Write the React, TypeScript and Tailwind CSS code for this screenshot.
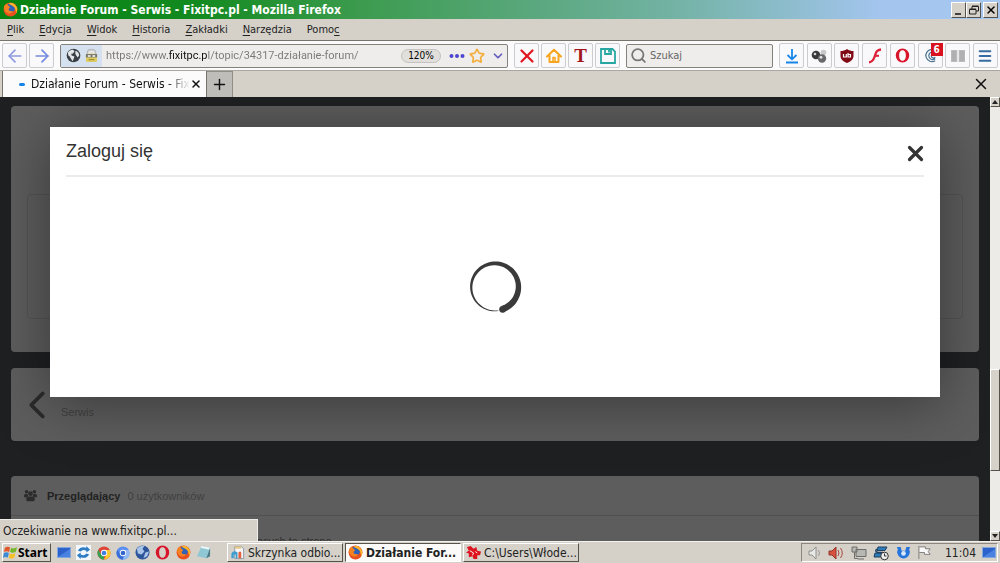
import type { ReactNode } from 'react'
import clsx from 'clsx'
import { ArrowLeft, ArrowRight, ChevronDown, ChevronLeft, Menu, Plus, Search, Star, X } from 'lucide-react'

const MENU = [
  ['', 'P', 'lik'],
  ['', 'E', 'dycja'],
  ['', 'W', 'idok'],
  ['', 'H', 'istoria'],
  ['', 'Z', 'akładki'],
  ['', 'N', 'arzędzia'],
  ['Pomo', 'c', ''],
]

const RAISED = 'border border-t-white border-l-white border-r-[#55524c] border-b-[#55524c] bg-[#d6d2ca]'

// Ring that grows thicker clockwise, from a hairline at the bottom to a round end
const RING = (() => {
  const outer: string[] = []
  const inner: string[] = []
  for (let i = 0; i <= 72; i++) {
    const t = i / 72
    const a = ((82 + t * 349) * Math.PI) / 180
    const half = 0.3 + 3 * t
    const at = (r: number) => `${(28 + r * Math.cos(a)).toFixed(2)} ${(28 + r * Math.sin(a)).toFixed(2)}`
    outer.push(at(24 + half * 0.8))
    inner.unshift(at(24 - half * 1.2))
  }
  return `M${outer.concat(inner).join('L')}Z`
})()

function FirefoxIcon({ className }: { className?: string }) {
  return (
    <svg viewBox="0 0 16 16" className={clsx('size-[15px] shrink-0', className)}>
      <circle cx="8" cy="8" r="7.4" fill="#e8501f" />
      <circle cx="8" cy="6.5" r="4.8" fill="#2f62b8" />
      <path d="M6 1.6C8 .8 11 1 12.500 2.700 15.500 5 16 9 14 12 13.500 7 12 5 10 4 8.500 3 7 3 6 1.600Z" fill="#fdb32a" />
      <path d="M1 4.500C2 3 3 3 3.500 1.500 5 3 6.500 4 7.500 5.500L6 7.500C6 9.500 8 10.500 11 9.500 9.500 12.500 6 13 4 11.500 2 10 1 8 1 4.500Z" fill="#f58220" />
    </svg>
  )
}

function ChromeIcon({ colors }: { colors: [string, string, string, string] }) {
  return (
    <svg viewBox="0 0 16 16" className="size-[14px]">
      <circle cx="8" cy="8" r="7.500" fill={colors[0]} />
      <path d="M1.500 4.300 5.200 10.500 8 8 8 15.500A7.500 7.500 0 0 1 1.500 4.300Z" fill={colors[1]} />
      <path d="M8 4.600H14.700A7.500 7.500 0 0 1 8 15.500L11 9.500Z" fill={colors[2]} />
      <circle cx="8" cy="8" r="3.600" fill="#fff" />
      <circle cx="8" cy="8" r="2.700" fill={colors[3]} />
    </svg>
  )
}

function OperaIcon() {
  return (
    <svg viewBox="0 0 16 16" className="size-[15px]">
      <path fillRule="evenodd" d="M8 .6A7.200 7.400 0 1 0 8 15.400 7.200 7.400 0 1 0 8 .6ZM8 2.400C10.500 2.400 11.600 5 11.600 8S10.500 13.600 8 13.600 4.400 11 4.400 8 5.500 2.400 8 2.400Z" fill="#d8152a" />
    </svg>
  )
}

function MonitorIcon() {
  return (
    <svg viewBox="0 0 14 12" className="h-3 w-[14px]">
      <rect x=".5" y=".5" width="13" height="10" fill="#2b62cc" stroke="#83a6dd" />
      <path d="M1 10 13 2V10Z" fill="#4a82e2" />
    </svg>
  )
}

function CrowdIcon() {
  return (
    <svg viewBox="0 0 14 14" className="h-[13px] w-[13px]" fill="#2c2c2c">
      <circle cx="2.800" cy="3" r="1.900" />
      <circle cx="11.200" cy="3" r="1.900" />
      <circle cx="7" cy="5" r="2.500" />
      <path d="M0 9V6.500Q1 5 4 5.500L4.500 8 3 9ZM14 9V6.500Q13 5 10 5.500L9.500 8 11 9Z" />
      <path d="M2.500 12.500V10Q3 8 5 8H9Q11 8 11.500 10V12.500Q11 13.300 10 13.300H4Q3 13.300 2.500 12.500Z" />
    </svg>
  )
}

function ToolButton({ label, children }: { label: string; children: ReactNode }) {
  return (
    <button
      aria-label={label}
      className="relative flex size-[25px] shrink-0 items-center justify-center rounded-xs border border-[#ccccd0] bg-[#f9f9fb]"
    >
      {children}
    </button>
  )
}

function TitleBar() {
  return (
    <header className="flex h-[19px] shrink-0 items-center bg-[linear-gradient(90deg,#078311_0%,#138a20_20%,#3c9b4e_36%,#72b2a3_67%,#a3c5ee_88%,#a6c8f0_100%)] pr-[2px] pl-[3px]">
      <FirefoxIcon />
      <h1 className="ml-[2px] flex-1 text-xs font-bold text-white">
        Działanie Forum - Serwis - Fixitpc.pl - Mozilla Firefox
      </h1>
      <div className="flex">
        <button aria-label="Minimalizuj" className={clsx(RAISED, 'flex h-4 w-[15px] items-center justify-center')}>
          <svg viewBox="0 0 12 12" className="size-3"><path d="M2 10H8" stroke="#111" strokeWidth="1.500" /></svg>
        </button>
        <button aria-label="Przywróć" className={clsx(RAISED, 'mr-[2px] flex h-4 w-[15px] items-center justify-center')}>
          <svg viewBox="0 0 12 12" className="size-3" fill="none" stroke="#222">
            <path d="M4 5V2.500H10.500V7H8M4 2H10.500M1.500 5.500H8V10H1.500ZM1.500 5H8" />
          </svg>
        </button>
        <button aria-label="Zamknij" className={clsx(RAISED, 'flex h-4 w-[15px] items-center justify-center')}>
          <X className="size-3 text-black" strokeWidth={3} />
        </button>
      </div>
    </header>
  )
}

function MenuBar() {
  return (
    <nav className="flex h-[22px] shrink-0 items-center gap-[15px] border-b border-[#77736d] px-[7px]">
      {MENU.map(([before, key, after]) => (
        <button key={before + key} className="text-[#222]">
          {before}
          <u className="underline-offset-2">{key}</u>
          {after}
        </button>
      ))}
    </nav>
  )
}

function NavBar() {
  return (
    <div className="flex h-[30px] shrink-0 items-center gap-[6px] border-b border-[#aaa7a2] bg-[#fbfbfb] px-[2px]">
      <div className="flex gap-[2px]">
        <ToolButton label="Wstecz"><ArrowLeft className="size-5 text-[#8c9be0]" /></ToolButton>
        <ToolButton label="Dalej"><ArrowRight className="size-5 text-[#7488dc]" /></ToolButton>
      </div>

      <div className="flex h-6 flex-1 items-center rounded-xs border border-[#85827d] bg-[#eeedeb] pr-[2px]">
        <div className="flex h-full w-[41px] items-center justify-center gap-1 bg-[#d6e1ef]">
          <svg viewBox="0 0 16 16" className="size-[15px]">
            <circle cx="8" cy="8" r="7.300" fill="#3b4046" />
            <path d="M2 5C4 2 6 1.500 8 2L9 4 7 6 5.500 6 6 8 9 9 8 12 7 14 5 11 4 9 2.500 8ZM10 3C13 4 14 6 14 8L12.500 10 11 8 10 6.500Z" fill="#e4e7ea" />
          </svg>
          <svg viewBox="0 0 14 16" className="h-[15px] w-[13px]">
            <path d="M2.500 7V4.500Q3 1.500 7 1.500T11.500 4.500V7" fill="#e4e5e2" stroke="#b9bcc0" strokeWidth="1.500" />
            <rect x="1" y="6" width="12" height="9" rx="2" fill="#dccb62" />
            <path d="M1 6.500H13V10H1Z" fill="#74746c" />
            <path d="M3 8.500H6M8 8.500H11" stroke="#fff" strokeWidth="1.500" />
            <path d="M4 12.500H10" stroke="#8f7c22" />
          </svg>
        </div>
        <input
          aria-label="Adres"
          readOnly
          value="https://www.fixitpc.pl/topic/34317-działanie-forum/"
          className="min-w-0 flex-1 bg-[linear-gradient(90deg,#777_0px,#777_65px,#111_65px,#111_106px,#777_106px)] bg-clip-text pl-1 font-['Roboto',sans-serif] text-transparent outline-none"
        />
        <button className="h-[14px] w-10 rounded-full border border-[#c4c3c0] bg-[#e0dfdc] text-[10px] leading-3 text-black">120%</button>
        <button aria-label="Akcje strony" className="ml-2">
          <svg viewBox="0 0 16 6" className="h-[6px] w-4" fill="#4b45cf">
            <circle cx="2.500" cy="3" r="2" /><circle cx="8" cy="3" r="2" /><circle cx="13.500" cy="3" r="2" />
          </svg>
        </button>
        <button aria-label="Dodaj zakładkę" className="ml-1"><Star className="size-4 text-[#f3ae3d]" strokeWidth={2.500} /></button>
        <button aria-label="Historia adresów" className="ml-[6px]"><ChevronDown className="size-[14px] text-[#625bc0]" strokeWidth={3} /></button>
      </div>

      <div className="flex gap-[2px]">
        <ToolButton label="Zatrzymaj"><X className="size-[22px] text-[#e11725]" strokeWidth={2.500} /></ToolButton>
        <ToolButton label="Strona startowa">
          <svg viewBox="0 0 16 16" className="size-4" fill="none" stroke="#f7a51c" strokeWidth="2" strokeLinejoin="round">
            <path d="M1 8.500 8 1.800 15 8.500M3.500 7.500V14H12.500V7.500" strokeLinecap="round" />
            <path d="M7 14V9.500H9V14" strokeWidth="1.500" />
          </svg>
        </ToolButton>
        <ToolButton label="Tekst">
          <span className="font-['Liberation_Serif',serif] text-[19px] leading-4 font-bold text-[#a3161c]">T</span>
        </ToolButton>
        <ToolButton label="Zapisz">
          <svg viewBox="0 0 16 16" className="size-4" fill="none" stroke="#28a7a2" strokeWidth="1.800">
            <path d="M1 1H12.500L15 3.500V15H1ZM5 1V6H11V1M9 2V4.500" />
          </svg>
        </ToolButton>
      </div>

      <label className="flex h-6 w-[147px] items-center rounded-xs border border-[#85827d] bg-[#eeedeb] pr-1 pl-[3px]">
        <Search className="size-[17px] text-[#777]" strokeWidth={2.500} />
        <input aria-label="Szukaj" placeholder="Szukaj" className="ml-[3px] w-24 outline-none placeholder:text-[#666]" />
      </label>

      <div className="flex w-[219px] justify-between">
        <ToolButton label="Pobrane">
          <svg viewBox="0 0 14 16" className="h-4 w-[14px]" fill="none" stroke="#1686e8" strokeWidth="1.800">
            <path d="M7 1V11M2.500 7 7 11.300 11.500 7M1 14.500H13" />
          </svg>
        </ToolButton>
        <ToolButton label="Kulki">
          <svg viewBox="0 0 16 14" className="h-[14px] w-4">
            <circle cx="12.500" cy="3.500" r="2.800" fill="#c8c8c8" />
            <circle cx="5" cy="6" r="4.300" fill="#38383a" />
            <circle cx="11" cy="9.500" r="4.200" fill="#68686b" />
            <circle cx="4" cy="5" r="1.300" fill="#d5d5d5" />
            <circle cx="10" cy="8.300" r="1.400" fill="#e6e6e6" />
          </svg>
        </ToolButton>
        <ToolButton label="uBlock">
          <svg viewBox="0 0 14 14" className="size-[14px]">
            <path d="M7 0C9 1.500 11 2 13.500 2V7C13.500 10.500 10 13 7 14 4 13 .5 10.500 .5 7V2C3 2 5 1.500 7 0Z" fill="#800b15" />
            <path d="M3.500 5V8H6.300V5M8 4V8H10.500V5.500H8.500" fill="none" stroke="#fff" strokeWidth="1.200" />
          </svg>
        </ToolButton>
        <ToolButton label="Flash">
          <svg viewBox="0 0 14 16" className="h-4 w-[14px]" fill="none" stroke="#dc2338">
            <path d="M13 1.500C8 2 8 5 6.500 9 5.500 12 4 14 1 14.300" strokeWidth="2.300" />
            <path d="M6.500 7.800H11" strokeWidth="2" />
          </svg>
        </ToolButton>
        <ToolButton label="Opera"><OperaIcon /></ToolButton>
        <ToolButton label="Zablokowane">
          <svg viewBox="0 0 16 16" className="size-[15px]" fill="none" stroke="#477091" strokeWidth="1.300">
            <path d="M9 1.500A6.500 6.500 0 1 0 13 13.500M10 4A4.200 4.200 0 1 0 13 11.500M11 6.300A2.200 2.200 0 1 0 13 9.500" />
          </svg>
          <span className="absolute -top-px -right-px h-[13px] w-3 bg-[#d8121f] text-center text-[10px] leading-[13px] font-bold text-white">6</span>
        </ToolButton>
        <ToolButton label="Biblioteka">
          <svg viewBox="0 0 16 14" className="h-[14px] w-4"><path d="M1 1H7.300V13H1ZM8.700 1H15V13H8.700Z" fill="#bababc" /><path d="M3 2V12M5 2V12M11 2V12M13 2V12" stroke="#a6a6a8" /></svg>
        </ToolButton>
        <ToolButton label="Menu"><Menu className="size-4 text-[#376ca3]" strokeWidth={3} /></ToolButton>
      </div>
    </div>
  )
}

function TabBar() {
  return (
    <div className="flex h-[26px] shrink-0 items-stretch">
      <div role="tab" aria-selected className="ml-[2px] flex w-[205px] items-center border-x border-[#77736d] bg-[#fbfbfb] pr-1 pl-4">
        <i className="h-[3px] w-[6px] rounded-full bg-[#1684e8]" />
        <span className="ml-[6px] flex-1 overflow-hidden text-xs whitespace-nowrap text-[#111] [mask-image:linear-gradient(90deg,#000_85%,transparent)]">
          Działanie Forum - Serwis - Fixitpc.pl
        </span>
        <button aria-label="Zamknij kartę"><X className="size-3 text-[#111]" strokeWidth={3} /></button>
      </div>
      <button aria-label="Nowa karta" className="flex w-[26px] items-center justify-center border-t border-r border-[#918e88] bg-[#bfbdb9]">
        <Plus className="size-[17px] text-[#111]" />
      </button>
      <div className="flex-1" />
      <button aria-label="Zamknij" className="mr-[10px]"><X className="size-[18px] text-[#111]" strokeWidth={2} /></button>
    </div>
  )
}

function ForumPage() {
  return (
    <main className="relative min-w-0 flex-1 overflow-hidden bg-[#1e2022] px-[11px] pt-[9px] font-['Liberation_Sans',sans-serif]">
      <section className="h-[246px] rounded bg-[#5d5d5d] px-4 pt-[88px]">
        <div className="h-[125px] rounded-sm border border-[#545454]" />
      </section>

      <a href="#serwis" className="mt-4 flex h-[73px] items-center rounded bg-[#5d5d5d] pl-[3px] text-[#414141]">
        <ChevronLeft className="size-[46px] text-[#2b2b2b]" strokeWidth={2} />
        <span className="mt-[14px] ml-px text-[11px]">Serwis</span>
      </a>

      <section className="mt-[35px] rounded bg-[#5d5d5d] text-[11px] text-[#404040]">
        <h3 className="flex h-10 items-center border-b border-[#505050] pl-[13px]">
          <CrowdIcon />
          <b className="ml-[10px] text-[#222]">Przeglądający</b>
          <span className="ml-[7px]">0 użytkowników</span>
        </h3>
        <p className="h-20 pt-[17px] pl-[10px] text-[#303030]">Brak zarejestrowanych użytkowników przeglądających tę stronę.</p>
      </section>

      {/* Login dialog over the dimmed page */}
      <div role="dialog" aria-labelledby="login-title" className="absolute inset-x-[50px] top-[30px] h-[270px] bg-white px-4 shadow-[0_5px_55px_rgba(0,0,0,0.4)]">
        <div className="flex h-[50px] items-center justify-between border-b-2 border-[#ebebeb]">
          <h2 id="login-title" className="text-lg text-[#333]">Zaloguj się</h2>
          <button aria-label="Zamknij okno" className="mt-1">
            <svg viewBox="0 0 17 17" className="size-[17px]"><path d="M2.500 2.500 14.500 14.500M14.500 2.500 2.500 14.500" stroke="#333" strokeWidth="3.200" strokeLinecap="round" /></svg>
          </button>
        </div>
        <div className="flex h-[220px] items-center justify-center">
          <svg viewBox="0 0 56 56" className="size-14" fill="#3a3a3a">
            <path d={RING} />
            <circle cx="35.600" cy="50.300" r="3.400" />
          </svg>
        </div>
      </div>

      <div className="absolute bottom-0 left-0 h-[22px] w-[258px] border-t border-r border-[#eeece8] bg-[#d5d1c9] pl-[3px] font-['DejaVu_Sans_Condensed','DejaVu_Sans',sans-serif] text-xs leading-[22px] text-[#222]">
        Oczekiwanie na www.fixitpc.pl...
      </div>
    </main>
  )
}

function ScrollBar() {
  return (
    <div className="flex w-[10px] shrink-0 flex-col bg-[#ecebe8]">
      <button aria-label="W górę" className={clsx(RAISED, 'flex h-[10px] items-center justify-center')}>
        <svg viewBox="0 0 6 4" className="h-1 w-[6px]"><path d="M0 4 3 0 6 4Z" fill="#222" /></svg>
      </button>
      <div className="flex-[263]" />
      <div className={clsx(RAISED, 'flex-[100]')} />
      <div className="flex-[60]" />
      <button aria-label="W dół" className={clsx(RAISED, 'flex h-[10px] items-center justify-center')}>
        <svg viewBox="0 0 6 4" className="h-1 w-[6px]"><path d="M0 0 3 4 6 0Z" fill="#222" /></svg>
      </button>
    </div>
  )
}

function TaskButton({ active, icon, children }: { active?: boolean; icon: ReactNode; children: ReactNode }) {
  return (
    <button
      className={clsx(
        'flex h-[19px] w-[116px] items-center gap-[3px] border pl-[2px] text-xs whitespace-nowrap text-[#222]',
        active
          ? 'border-t-[#55524c] border-r-white border-b-white border-l-[#55524c] bg-[#fbfaf9] font-bold'
          : 'border-t-white border-r-[#55524c] border-b-[#55524c] border-l-white bg-[#d6d2ca]',
      )}
    >
      {icon}
      {children}
    </button>
  )
}

function TaskBar() {
  return (
    <footer className="flex h-[22px] shrink-0 items-center border-t border-[#f4f2ee] pr-[2px] pl-[2px]">
      <button className={clsx(RAISED, "flex h-[19px] w-[49px] items-center font-['Noto_Sans',sans-serif] text-xs font-bold text-black")}>
        <svg viewBox="0 0 16 16" className="size-[15px] shrink-0">
          <path d="M2 3Q5 1 7.500 2.500L6.500 7.500Q4 6 1 7.500Z" fill="#e4572a" />
          <path d="M8.500 3Q11 4.500 15 2.500L13.500 7.500Q10 9 7.500 7.500Z" fill="#76b82a" />
          <path d="M1 8.500Q4 7 6.300 8.500L5 13.500Q3 12 0 13.500Z" fill="#3a8ad6" />
          <path d="M7.300 9Q10 10.500 13.300 8.500L12 13.500Q9 15.500 6 13.500Z" fill="#f6c02c" />
        </svg>
        Start
      </button>

      <div className="ml-[6px] flex w-[154px] items-center justify-between">
        <MonitorIcon />
        <svg viewBox="0 0 16 16" className="size-[15px]">
          <rect width="16" height="16" fill="#f3f7fb" />
          <path d="M2 6Q5 1 11 3V1L15 5 11 8V6Q7 4 5 7ZM14 10Q11 15 5 13V15L1 11 5 8V10Q9 12 11 9Z" fill="#2e7cc4" />
        </svg>
        <ChromeIcon colors={['#dd4436', '#35a250', '#f8c930', '#3f7ee0']} />
        <ChromeIcon colors={['#5b8ff0', '#3b6fd8', '#94bbf6', '#3465c8']} />
        <svg viewBox="0 0 16 16" className="size-[15px]">
          <circle cx="8" cy="8" r="7.500" fill="#2d559c" />
          <path d="M2 4Q5 0 10 1L8 4 10 7 7 10 3 9ZM11 8 15 7 13 12 9 14Z" fill="#a9c4e6" />
        </svg>
        <OperaIcon />
        <FirefoxIcon />
        <svg viewBox="0 0 16 16" className="size-[15px]">
          <path d="M6 1 15 3 11 14 1 12Z" fill="#8fc7d4" />
          <path d="M6 1 15 3 14 5 5 3Z" fill="#eef6f8" />
          <path d="M11 14 15 3V12Z" fill="#4a7d88" />
        </svg>
      </div>

      <div className="ml-4 flex gap-[2px]">
        <TaskButton
          icon={
            <svg viewBox="0 0 16 16" className="size-[15px] shrink-0">
              <path d="M5 1.500H12L14.500 4V14.500H5Z" fill="#f4f6f8" stroke="#8a98a8" />
              <path d="M5 1.500H12V4H5Z" fill="#e9c88a" />
              <path d="M1.500 14V9Q4 5 8 8V14H6V10H4V14Z" fill="#3c9ed0" />
              <path d="M9 14V8Q11 6 12 8V14Z" fill="#e2603c" />
            </svg>
          }
        >
          Skrzynka odbio...
        </TaskButton>
        <TaskButton active icon={<FirefoxIcon />}>Działanie For...</TaskButton>
        <TaskButton
          icon={
            <svg viewBox="0 0 16 16" className="size-[15px] shrink-0" fill="#dd1420">
              <path d="M1 2 5 1 8 4 11 2 12 6 16 7 15 11 12 11 12 15 8 15 7 12 3 13 3 9 0 8 3 6Z" />
              <path d="M4 6 8 8.500 7 11M10 7 12 8.500" stroke="#fff" fill="none" />
            </svg>
          }
        >
          C:\Users\Włode...
        </TaskButton>
      </div>

      <div className="flex-1" />

      <div className="flex h-[19px] w-[197px] items-center border border-t-[#8b8780] border-r-white border-b-white border-l-[#8b8780] pl-[6px]">
        <div className="flex w-[124px] items-center justify-between">
          <svg viewBox="0 0 14 14" className="size-[14px]"><path d="M1 5H4L8 1V13L4 9H1Z" fill="#e9e9e7" stroke="#8e8e8c" /><path d="M10.500 4Q12.500 7 10.500 10" fill="none" stroke="#999" /></svg>
          <svg viewBox="0 0 16 14" className="h-[14px] w-4"><path d="M1 5H4L8 1V13L4 9H1Z" fill="#d6523e" stroke="#94352a" /><path d="M10 4Q12 7 10 10M12.500 2Q16 7 12.500 12" fill="none" stroke="#a9473b" /></svg>
          <svg viewBox="0 0 16 16" className="size-4" fill="#b6b6b2" stroke="#6d6d6a"><path d="M1 2H6V7H1ZM5 4.500H15V11.500H5Z" /><path d="M3.500 7V13.500H7M7 14H13" fill="none" /></svg>
          <svg viewBox="0 0 16 16" className="size-4"><path d="M5 2H14L12 5.500H4ZM2 8H11V12H1Z" fill="#2c7cb8" stroke="#1f3f63" /><path d="M4 4Q1 6 5 7.500H10" fill="none" stroke="#1f3f63" strokeWidth="1.500" /><circle cx="11.500" cy="11" r="3.800" fill="#eee" stroke="#333" /><path d="M11.500 8.500V11H13.500" fill="none" stroke="#333" /></svg>
          <svg viewBox="0 0 16 16" className="size-[15px]"><path d="M1 2 5 2 6 6 10 6 11 2 15 2 14 5Q16 8 13 12 8 17 3 12 0 8 2 5Z" fill="#2474dc" /><circle cx="8" cy="9" r="2.500" fill="#d8e8fa" /></svg>
          <svg viewBox="0 0 16 16" className="size-[15px]"><path d="M2 1V15M2.500 2H9V4H14L12 7 14 10H8V8H2.500" fill="#f8f8f8" stroke="#7d7d7a" /></svg>
        </div>
        <time className="ml-[13px] text-xs text-[#222]">11:04</time>
        <span className="ml-[6px]"><MonitorIcon /></span>
      </div>
    </footer>
  )
}

export default function App() {
  return (
    <div className="flex h-screen flex-col overflow-hidden bg-[#d5d1c9] font-['DejaVu_Sans_Condensed','DejaVu_Sans',sans-serif] text-[11px] leading-4">
      <TitleBar />
      <MenuBar />
      <NavBar />
      <TabBar />
      <div className="flex min-h-0 flex-1">
        <ForumPage />
        <ScrollBar />
      </div>
      <TaskBar />
    </div>
  )
}
